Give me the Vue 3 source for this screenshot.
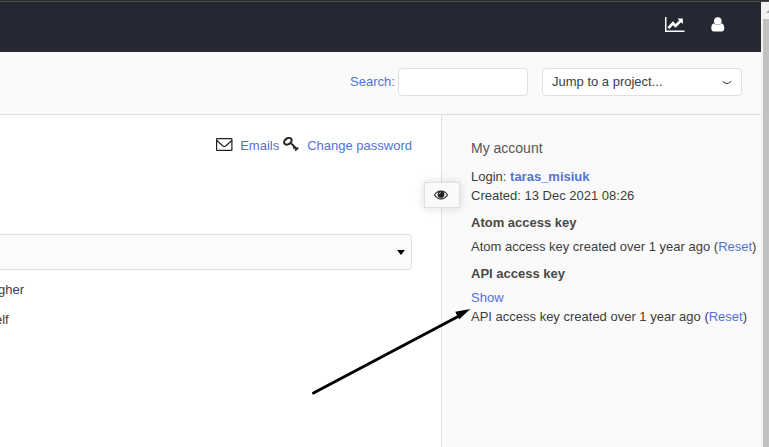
<script setup>
const keys = [
  { title: 'Atom access key', text: 'Atom access key created over 1 year ago', show: false },
  { title: 'API access key', text: 'API access key created over 1 year ago', show: true },
]
</script>

<template>
  <div class="window">
    <div class="edge"></div>
    <div class="viewport">
      <div class="page">
        <header class="header">
          <svg class="chart" width="20" height="16" viewBox="0 0 20 16">
            <path d="M.7 0V14.3H19.5" fill="none" stroke="#fff" stroke-width="1.500" />
            <path d="M3.400 11.200 8 6.300l2.600 2.600 5-5" fill="none" stroke="#fff" stroke-width="2.700" />
            <path d="M12.400 1.500h5.500v5.500z" fill="#fff" />
          </svg>
          <svg class="user" width="14" height="15" viewBox="0 0 14 15">
            <circle cx="6.800" cy="4" r="3.800" fill="#fff" />
            <path d="M3 6.300C1 6.800.3 8.700.3 11.500c0 1.800 1 2.900 2.500 2.900h8c1.500 0 2.500-1.100 2.500-2.900 0-2.800-.7-4.700-2.700-5.200-2 2.300-5.600 2.300-7.600 0z" fill="#fff" />
          </svg>
        </header>
        <div class="toolbar">
          <a class="search-label">Search<span>:</span></a>
          <input class="search" type="text" />
          <div class="jump">
            <span>Jump to a project...</span>
            <svg width="10" height="5" viewBox="0 0 10 5"><path d="M.7 1.300 3.200 3.100Q4.900 4.100 6.700 3.100L9.200 1.300" fill="none" stroke="#333" stroke-width="1" /></svg>
          </div>
        </div>
        <div class="body">
          <main class="main">
            <div class="actions">
              <svg width="17" height="14" viewBox="0 0 17 14">
                <rect x=".6" y=".6" width="15.300" height="11.800" rx=".5" fill="none" stroke="#222" stroke-width="1.200" />
                <path d="M.8 2.500 7 8q1.300 1 2.600 0l6.200-5.500" fill="none" stroke="#222" stroke-width="1.200" />
              </svg>
              <a class="emails">Emails</a>
              <svg class="key" width="16" height="15" viewBox="0 0 16 15">
                <ellipse cx="4.900" cy="4.300" rx="4.100" ry="2.900" transform="rotate(-35 4.900 4.300)" fill="none" stroke="#222" stroke-width="2" />
                <path d="M7.300 5.600 14.300 12.500M10.300 11.500l2.200-2.200M12.100 13.600l3-3" fill="none" stroke="#222" stroke-width="1.900" />
              </svg>
              <a class="password">Change password</a>
            </div>
            <div class="select"><i></i></div>
            <p class="option first">gher</p>
            <p class="option second">elf</p>
          </main>
          <aside class="sidebar">
            <h3>My account</h3>
            <p class="login">Login: <a>taras_misiuk</a></p>
            <p class="created">Created: 13 Dec 2021 08:26</p>
            <template v-for="k in keys" :key="k.title">
              <h4>{{ k.title }}</h4>
              <p v-if="k.show"><a>Show</a></p>
              <p>{{ k.text }} (<a>Reset</a>)</p>
            </template>
          </aside>
          <button class="toggle" type="button">
            <svg width="14" height="10" viewBox="0 0 14 10">
              <path d="M.5 5C3.700-.4 10.300-.4 13.500 5 10.300 10.200 3.700 10.200.5 5z" fill="none" stroke="#222" stroke-width="1.100" />
              <circle cx="7" cy="4.400" r="3.400" fill="#222" />
              <path d="M5.200 4.200Q5.300 2.500 7 2.400" fill="none" stroke="#ddd" stroke-width=".7" />
            </svg>
          </button>
          <svg class="arrow" width="160" height="90" viewBox="0 0 160 90">
            <path d="M2.500 87 149 9.500" stroke="#000" stroke-width="3" stroke-linecap="round" />
            <path d="M159.300 3 144.300 5.700 146.500 10.500 148.300 13.300z" fill="#000" />
          </svg>
        </div>
      </div>
      <div class="scrollbar">
        <div class="up"><svg width="6" height="4" viewBox="0 0 6 4"><path d="M0 4 4 0l2 2v2z" fill="#a3a3a3" /></svg></div>
        <div class="thumb"></div>
      </div>
    </div>
  </div>
</template>

<style>
body { overflow: hidden; }
</style>

<style scoped>
.window {
  width: 769px;
  height: 447px;
  font: 13px/19px "Liberation Sans", Arial, sans-serif;
  color: #3d3d3d;
  background: #fff;
  overflow: hidden;
}
.window * { box-sizing: border-box; }
svg { display: block; flex: none; }
p, h3, h4 { margin: 0; white-space: nowrap; }
a { color: #5471d5; }
.edge { height: 2px; background: #2f2d2d; border-bottom: 1px solid #4b4949; }
.viewport { display: flex; height: 445px; }
.page { width: 761px; display: flex; flex-direction: column; }
.header {
  height: 50px;
  flex: none;
  background: #252733;
  display: flex;
  justify-content: flex-end;
  align-items: flex-start;
  gap: 26px;
  padding: 15px 36px 0 0;
}
.toolbar {
  height: 63px;
  flex: none;
  background: #fafafa;
  border-bottom: 1px solid #dedfe3;
  display: flex;
  align-items: flex-start;
  padding: 16px 19px 0 350px;
}
.search-label { width: 48px; line-height: 28px; }
.search-label span { color: #777; }
.search, .jump {
  height: 28px;
  border: 1px solid #dfe0e5;
  border-radius: 4px;
  background: #fff;
}
.search { width: 130px; padding: 0 6px; outline: none; }
.jump {
  width: 200px;
  margin-left: 14px;
  padding: 0 9px;
  line-height: 25px;
  display: flex;
  align-items: flex-start;
  justify-content: space-between;
}
.jump svg { margin-top: 11px; }
.body { position: relative; flex: 1; display: flex; }
.main { width: 441px; padding-right: 29px; overflow: hidden; }
.actions {
  display: flex;
  justify-content: flex-end;
  align-items: flex-start;
  height: 119px;
  padding-top: 21px;
}
.actions svg { margin-top: 2px; }
.actions .key { margin: 1px 8px 0 4px; }
.emails { margin-left: 7px; }
.select {
  height: 36px;
  border: 1px solid #dfe0e5;
  border-left: 0;
  border-radius: 0 4px 4px 0;
  background: #fafbfd;
  display: flex;
  align-items: center;
  justify-content: flex-end;
  padding-right: 6px;
}
.select i { border: 4.5px solid transparent; border-top: 5px solid #000; border-bottom: 0; }
.option { width: 60px; }
.first { margin: 10px 0 11px -2px; }
.second { margin-left: -5px; }
.sidebar {
  width: 320px;
  border-left: 1px solid #dedfe3;
  background: #fafafa;
  padding: 23px 0 0 29px;
}
h3 { font-size: 14px; font-weight: 400; line-height: 20px; color: #555; margin-bottom: 9px; }
.login a { font-weight: 700; }
h4 { font-size: 13px; line-height: 19px; color: #484848; margin: 8px 0 5px; }
.toggle {
  position: absolute;
  left: 424px;
  top: 67px;
  width: 36px;
  height: 26px;
  border: 1px solid #dfe0e5;
  background: #fafafa;
  box-shadow: 0 0 10px rgba(0, 0, 0, .15);
  padding: 0 2px 0 0;
  display: flex;
  align-items: center;
  justify-content: center;
}
.arrow { position: absolute; left: 311px; top: 191px; }
.scrollbar { width: 8px; background: #f1f1f1; padding-left: 2px; }
.up { height: 17px; padding: 7px 0 0 3px; overflow: hidden; }
.thumb { height: 428px; background: #c1c1c1; }
</style>
